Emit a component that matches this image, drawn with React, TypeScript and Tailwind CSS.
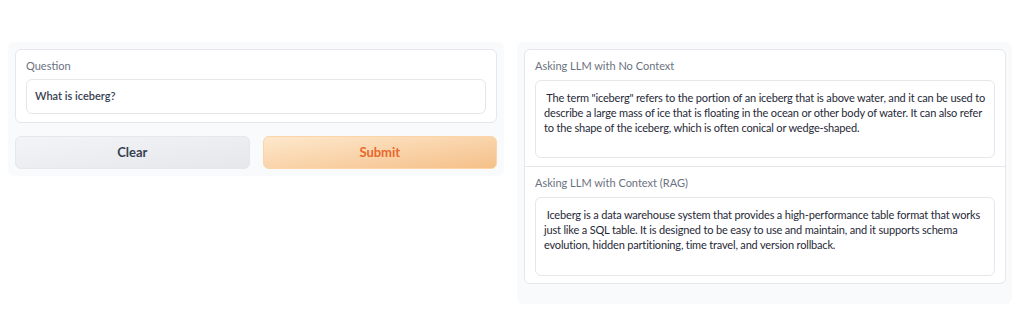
import React from "react";

const font = { fontFamily: "Lato, 'Open Sans', sans-serif" };

const Lines = ({ lines }: { lines: string[] }) => (
  <>
    {lines.map((l, i) => (
      <div key={i} className="whitespace-pre">{l}</div>
    ))}
  </>
);

export default function App() {
  return (
    <div className="w-[1024px] h-[312px] bg-white flex items-start pt-[42px] pl-[8px] gap-[13px] text-[#1f2937]" style={font}>
      <div className="w-[496px] bg-[#f9fafb] rounded-[6px] p-[7px] flex flex-col gap-[13px]">
        <div className="bg-white border border-[#e5e7eb] rounded-[6px] px-[10px] pt-[9px] pb-[8px] flex flex-col">
          <div className="text-[11px] leading-[14px] text-[#6b7280] mb-[6px]">Question</div>
          <div className="h-[35px] border border-[#e5e7eb] rounded-[6px] flex items-center px-[8px] text-[11px] text-[#374151] font-semibold">
            What is iceberg?
          </div>
        </div>
        <div className="flex gap-[13px]">
          <button className="flex-1 h-[33px] rounded-[6px] border border-[#e5e7eb] bg-gradient-to-br from-[#f3f4f6] to-[#e5e7eb] text-[13px] font-bold text-[#374151]">
            Clear
          </button>
          <button className="flex-1 h-[33px] rounded-[6px] border border-[#fbd5a8] bg-gradient-to-br from-[#fde8cc] to-[#f5c089] text-[13px] font-bold text-[#e8692c]">
            Submit
          </button>
        </div>
      </div>
      <div className="w-[495px] bg-[#f9fafb] rounded-[6px] pl-[7px] pr-[6px] pt-[7px] pb-[20px]">
        <div className="bg-white border border-[#e5e7eb] rounded-[6px] flex flex-col">
          <div className="px-[10px] pt-[9px] pb-[8px]">
            <div className="text-[11px] leading-[14px] text-[#6b7280] mb-[7px]">Asking LLM with No Context</div>
            <div className="h-[78px] border border-[#e5e7eb] rounded-[6px] px-[8px] pt-[9px] text-[11px] leading-[15px] tracking-[-0.17px] text-[#1f2937]">
              <Lines
                lines={[
                  " The term \"iceberg\" refers to the portion of an iceberg that is above water, and it can be used to",
                  "describe a large mass of ice that is floating in the ocean or other body of water. It can also refer",
                  "to the shape of the iceberg, which is often conical or wedge-shaped.",
                ]}
              />
            </div>
          </div>
          <div className="border-t border-[#e5e7eb] px-[10px] pt-[9px] pb-[7px]">
            <div className="text-[11px] leading-[14px] text-[#6b7280] mb-[7px]">Asking LLM with Context (RAG)</div>
            <div className="h-[79px] border border-[#e5e7eb] rounded-[6px] px-[8px] pt-[9px] text-[11px] leading-[15px] tracking-[-0.17px] text-[#1f2937]">
              <Lines
                lines={[
                  " Iceberg is a data warehouse system that provides a high-performance table format that works",
                  "just like a SQL table. It is designed to be easy to use and maintain, and it supports schema",
                  "evolution, hidden partitioning, time travel, and version rollback.",
                ]}
              />
            </div>
          </div>
        </div>
      </div>
    </div>
  );
}
